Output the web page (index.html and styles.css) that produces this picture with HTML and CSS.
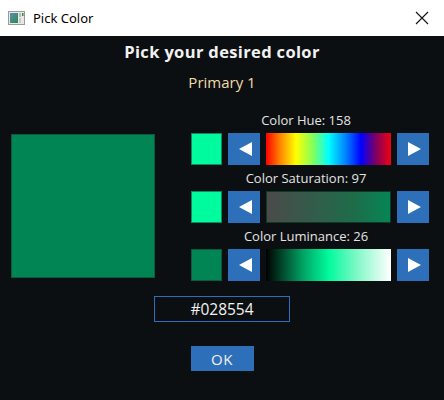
FILE: index.html
```html
<!DOCTYPE html>
<html>
<head>
<meta charset="utf-8">
<link rel="stylesheet" href="styles.css">
</head>
<body>
<div class="window">
  <div class="titlebar">
    <svg class="app-icon" width="17" height="14" viewBox="0 0 17 14">
      <rect x="0.5" y="0.5" width="16" height="13" fill="#e8e8e8" stroke="#9a9a9a"/>
      <defs>
        <linearGradient id="g" x1="0" y1="0" x2="1" y2="1">
          <stop offset="0" stop-color="#5a8fb8"/>
          <stop offset="1" stop-color="#2f8a4a"/>
        </linearGradient>
      </defs>
      <rect x="2" y="2" width="8" height="10" fill="url(#g)"/>
      <rect x="11" y="2" width="2" height="4" fill="#b8b8b8"/>
      <rect x="11" y="7" width="2" height="5" fill="#c8c8c8"/>
      <rect x="14" y="2" width="1.5" height="3" fill="#3a8a3a"/>
    </svg>
    <span class="title-text">Pick Color</span>
    <svg class="close" width="14" height="14" viewBox="0 0 14 14">
      <path d="M1 1 L13 13 M13 1 L1 13" stroke="#111" stroke-width="1.1" fill="none"/>
    </svg>
  </div>
  <div class="content">
    <div class="heading">Pick your desired color</div>
    <div class="subheading">Primary 1</div>
    <div class="main">
      <div class="preview"></div>
      <div class="rows">
        <div class="row">
          <div class="label">Color Hue: 158</div>
          <div class="controls">
            <div class="swatch mint"></div>
            <div class="btn"><span class="tri-left"></span></div>
            <div class="bar hue"></div>
            <div class="btn"><span class="tri-right"></span></div>
          </div>
        </div>
        <div class="row">
          <div class="label">Color Saturation: 97</div>
          <div class="controls">
            <div class="swatch mint"></div>
            <div class="btn"><span class="tri-left"></span></div>
            <div class="bar sat"></div>
            <div class="btn"><span class="tri-right"></span></div>
          </div>
        </div>
        <div class="row">
          <div class="label">Color Luminance: 26</div>
          <div class="controls">
            <div class="swatch deep"></div>
            <div class="btn"><span class="tri-left"></span></div>
            <div class="bar lum"></div>
            <div class="btn"><span class="tri-right"></span></div>
          </div>
        </div>
      </div>
    </div>
    <div class="hex">#028554</div>
    <div class="ok">OK</div>
  </div>
</div>
</body>
</html>
```
FILE: styles.css
```css
* { box-sizing: border-box; }
html, body { margin: 0; padding: 0; }
body { width: 444px; height: 400px; overflow: hidden; background: #0c0f11; }
.window { width: 444px; height: 400px; display: flex; flex-direction: column; }
.titlebar {
  height: 36px; background: #fff; display: flex; align-items: center;
  padding-left: 8px; padding-right: 15px;
  font-family: "Noto Sans", "Liberation Sans", sans-serif; font-size: 13px; color: #000;
}
.app-icon { margin-right: 8px; }
.title-text { flex: 1; }
.content {
  flex: 1; background: #0c0f11; display: flex; flex-direction: column; align-items: center;
  font-family: "Open Sans", "DejaVu Sans", sans-serif; color: #e6e6e6;
}
.heading { font-weight: 700; font-size: 16.5px; letter-spacing: 0.35px; margin-top: 6px; height: 20px; line-height: 20px; color: #f2f2f2; }
.subheading { font-size: 15px; color: #f0dca8; margin-top: 10px; height: 20px; line-height: 20px; }
.main { align-self: stretch; display: flex; align-items: flex-start; padding-left: 11px; margin-top: 15px; }
.preview { width: 144px; height: 144px; background: #028554; border: 1px solid #0b5a3b; margin-top: 27px; }
.rows { margin-left: 36px; display: flex; flex-direction: column; }
.row { display: flex; flex-direction: column; }
.label { height: 26px; line-height: 26px; text-align: center; font-size: 13px; color: #e4e4e4; padding-right: 8px; }
.controls { display: flex; gap: 6px; height: 32px; }
.swatch { width: 31px; height: 32px; }
.mint { background: #00fb9f; border: 1px solid #0c8a5c; }
.deep { background: #028554; border: 1px solid #0b5a3b; }
.btn { width: 32px; height: 32px; background: #2e6fba; display: flex; align-items: center; justify-content: center; }
.tri-left { width: 0; height: 0; border-top: 7px solid transparent; border-bottom: 7px solid transparent; border-right: 13px solid #fff; margin-left: 2px; }
.tri-right { width: 0; height: 0; border-top: 7px solid transparent; border-bottom: 7px solid transparent; border-left: 13px solid #fff; margin-left: 3px; }
.bar { width: 125px; height: 32px; }
.hue { background: linear-gradient(to right, #ff0000 0%, #ff8c00 12%, #ffff00 24%, #80ff60 38%, #00ffff 50%, #0080ff 64%, #0000ff 76%, #800060 88%, #f00010 100%); }
.sat { background: linear-gradient(to right, #4a4a4a, #1e6c4a 70%, #068555); border: 1px solid #0c3a24; }
.lum { background: linear-gradient(to right, #000000, #01a565 30%, #00fa9c 50%, #8cf8cc 75%, #ffffff); }
.hex {
  margin-top: 15px; width: 136px; height: 26px; border: 1px solid #2e6fba;
  display: flex; align-items: center; justify-content: center;
  font-size: 15.5px; color: #f2f2f2;
}
.ok {
  margin-top: 24px; width: 63px; height: 25px; background: #2e6fba;
  display: flex; align-items: center; justify-content: center;
  font-size: 15px; letter-spacing: 0.5px; color: #f2f2f2;
}
```
